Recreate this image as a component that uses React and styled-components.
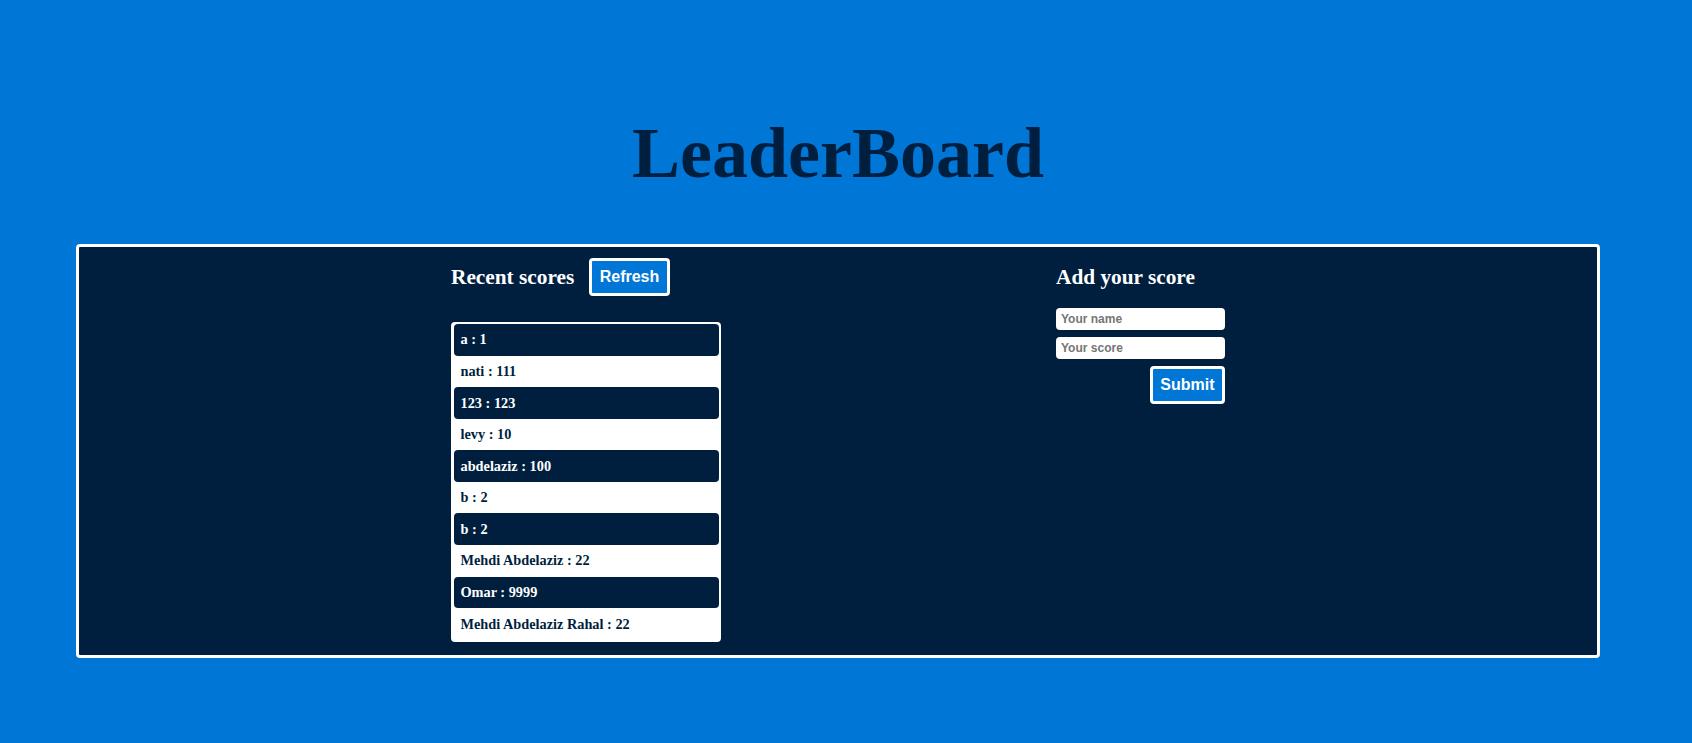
import React from "react";
import styled, { createGlobalStyle } from "styled-components";

const GlobalStyle = createGlobalStyle`
  html, body {
    margin: 0;
    padding: 0;
    background-color: #0076d6;
    font-family: "Liberation Serif", serif;
  }
`;

const Page = styled.div`
  width: 1524px;
  margin-left: 76px;
  padding-top: 112px;
  padding-bottom: 60px;
`;

const Title = styled.h1`
  margin: 0 0 49px;
  text-align: center;
  font-family: "Liberation Serif", serif;
  font-size: 72px;
  font-weight: 700;
  color: #001f3f;
`;

const Board = styled.main`
  box-sizing: border-box;
  width: 100%;
  height: 414px;
  background-color: #001f3f;
  border: 3px solid #ffffff;
  border-radius: 4px;
  padding-top: 11px;
  display: flex;
  justify-content: center;
  gap: 335px;
`;

const Column = styled.section`
  display: flex;
  flex-direction: column;
  width: ${(props) => props.width};
`;

const Header = styled.div`
  display: flex;
  align-items: center;
  gap: 15px;
  height: 38px;
`;

const Heading = styled.h3`
  margin: 0;
  font-size: 21.3px;
  font-weight: 700;
  color: #ffffff;
`;

const Button = styled.button`
  font-family: "Liberation Sans", Arial, sans-serif;
  font-size: 16px;
  font-weight: 700;
  color: #ffffff;
  background-color: #0076d6;
  border: 3px solid #ffffff;
  border-radius: 4px;
  padding: 7px 7.5px;
  line-height: 18px;
  cursor: pointer;
`;

const List = styled.ul`
  list-style: none;
  margin: 25.5px 0 0;
  padding: 2.5px;
  background-color: #ffffff;
  border-radius: 4px;
`;

const Item = styled.li`
  padding: 7.4px 7px 7.2px;
  border-radius: 4px;
  font-size: 14.3px;
  font-weight: 700;
  color: ${(props) => (props.dark ? "#ffffff" : "#001f3f")};
  background-color: ${(props) => (props.dark ? "#001f3f" : "transparent")};
`;

const Form = styled.form`
  display: flex;
  flex-direction: column;
  align-items: flex-end;
  gap: 7px;
  margin-top: 12px;
`;

const Input = styled.input`
  box-sizing: border-box;
  width: 100%;
  height: 22px;
  border: none;
  border-radius: 4px;
  padding: 0 5px;
  font-family: "Liberation Sans", Arial, sans-serif;
  font-size: 12px;
  font-weight: 700;
  color: #333;
  outline: none;
  &::placeholder {
    color: #757575;
  }
`;

const scores = [
  ["a", 1],
  ["nati", 111],
  ["123", 123],
  ["levy", 10],
  ["abdelaziz", 100],
  ["b", 2],
  ["b", 2],
  ["Mehdi Abdelaziz", 22],
  ["Omar", 9999],
  ["Mehdi Abdelaziz Rahal", 22],
];

const App = () => {
  return (
    <Page>
      <GlobalStyle />
      <Title>LeaderBoard</Title>
      <Board>
        <Column width="270px">
          <Header>
            <Heading>Recent scores</Heading>
            <Button type="button">Refresh</Button>
          </Header>
          <List>
            {scores.map(([name, score], i) => (
              <Item key={i} dark={i % 2 === 0}>
                {name} : {score}
              </Item>
            ))}
          </List>
        </Column>
        <Column width="169px">
          <Header>
            <Heading>Add your score</Heading>
          </Header>
          <Form onSubmit={(e) => e.preventDefault()}>
            <Input type="text" placeholder="Your name" />
            <Input type="number" placeholder="Your score" />
            <Button type="submit">Submit</Button>
          </Form>
        </Column>
      </Board>
    </Page>
  );
};

export default App;
